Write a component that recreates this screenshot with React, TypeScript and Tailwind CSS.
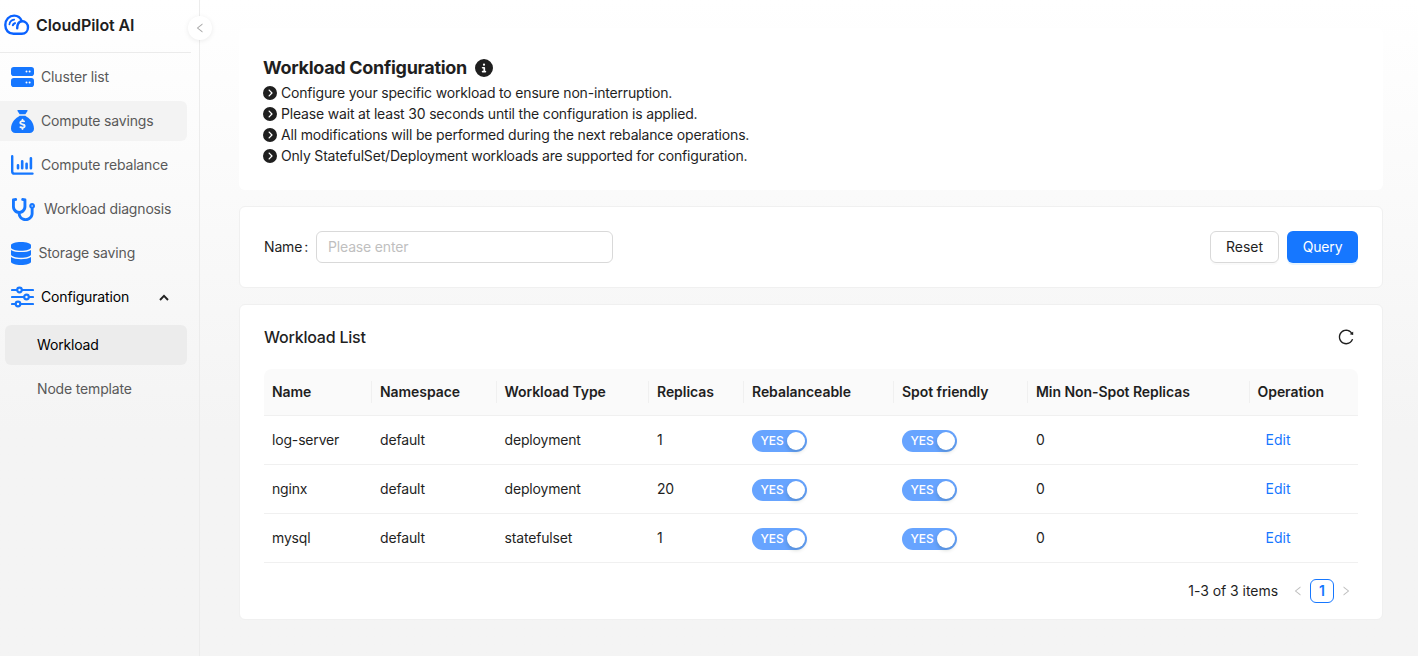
import type { ReactNode } from 'react';
import { FaCircleChevronRight, FaCircleInfo, FaSackDollar } from 'react-icons/fa6';
import { FaDatabase, FaStethoscope } from 'react-icons/fa';
import { AiOutlineLeft, AiOutlineReload, AiOutlineRight } from 'react-icons/ai';

function CloudLogo() {
  return (
    <svg width="26" height="22" viewBox="0 0 26 22" fill="none" stroke="#0a62ff" strokeWidth="2.4" strokeLinecap="round" strokeLinejoin="round">
      <path d="M13.500 19.800H9.500C4.600 19.800 1.300 16.200 1.300 11C1.300 5.500 5.200 1.600 10.200 1.600C13.800 1.600 16.400 3.600 17.700 7C21.800 7.200 24 10 24 13.300C24 17 21.400 19.800 17.800 19.800H12.500" />
      <path d="M13.200 14.300C13.200 10.400 15 7.600 17.700 7.200" />
      <path d="M5.400 10.400C5.800 7.700 7.500 6.100 10.200 5.700" strokeWidth="1.700" />
      <path d="M8.900 11.200C9.200 10.100 9.900 9.500 10.900 9.200" strokeWidth="2.200" />
    </svg>
  );
}

function ServerIcon() {
  return (
    <svg width="23" height="20" viewBox="0 0 23 20">
      <rect width="23" height="9" rx="2.800" fill="#1677ff" />
      <rect y="11" width="23" height="9" rx="2.800" fill="#1677ff" />
      <g fill="#fff">
        <circle cx="15.500" cy="4.500" r="1" />
        <circle cx="18.600" cy="4.500" r="1" />
        <circle cx="15.500" cy="15.500" r="1" />
        <circle cx="18.600" cy="15.500" r="1" />
      </g>
    </svg>
  );
}

function ChartIcon() {
  return (
    <svg width="23" height="20" viewBox="0 0 23 20" fill="none" stroke="#1677ff" strokeWidth="2.400" strokeLinecap="round" strokeLinejoin="round">
      <path d="M1.200 1.200V16.400Q1.200 18.600 3.400 18.600H21.500" />
      <path d="M7 10.300V13.300M11.200 6.200V13.300M15.600 8.800V13.300M19.900 3.200V13.300" strokeWidth="2.600" />
    </svg>
  );
}

function SlidersIcon() {
  return (
    <svg width="23" height="22" viewBox="0 0 23 22" fill="none" stroke="#1677ff" strokeWidth="2.200" strokeLinecap="round">
      <path d="M1 4H6M11 4H22M1 11H12.500M18.500 11H22M1 18H4M10 18H22" />
      <circle cx="8.500" cy="4" r="2.300" />
      <circle cx="15.500" cy="11" r="2.300" />
      <circle cx="7" cy="18" r="2.300" />
    </svg>
  );
}

function MenuItem({ icon, label, gap, className = '' }: { icon: ReactNode; label: string; gap: string; className?: string }) {
  return (
    <div className={`flex h-10 w-[187px] items-center rounded-r-md pl-[11px] ${className}`}>
      {icon}
      <span className={gap}>{label}</span>
    </div>
  );
}

function Sidebar() {
  return (
    <aside className="relative h-full w-[200px] shrink-0 border-r border-[#ececec] tracking-[-0.16px] text-[#595959]">
      <div className="flex h-[53px] w-[191px] items-center border-b border-[#ebebeb] pb-0.5 pl-1">
        <CloudLogo />
        <span className="ml-1.5 text-base font-semibold tracking-[-0.1px] text-[#1f1f1f]">CloudPilot AI</span>
      </div>
      <nav className="flex flex-col gap-1 pt-1">
        <MenuItem icon={<ServerIcon />} label="Cluster list" gap="ml-[7px]" />
        <MenuItem icon={<FaSackDollar size={23} color="#1677ff" />} label="Compute savings" gap="ml-[7px]" className="bg-[#f3f3f3]" />
        <MenuItem icon={<ChartIcon />} label="Compute rebalance" gap="ml-[7px]" />
        <MenuItem icon={<FaStethoscope size={23} className="ml-px" color="#1677ff" />} label="Workload diagnosis" gap="ml-[9px]" />
        <MenuItem icon={<FaDatabase size={23} className="w-5" color="#1677ff" />} label="Storage saving" gap="ml-[7.5px]" />
        <div className="flex h-10 w-[187px] items-center pl-[11px] text-black">
          <SlidersIcon />
          <span className="ml-[7px]">Configuration</span>
          <svg className="mr-[18px] ml-auto" width="10" height="7" viewBox="0 0 10 7" fill="none" stroke="#222" strokeWidth="1.900">
            <path d="M1 6L5 1.800L9 6" />
          </svg>
        </div>
        <div className="mt-1 ml-[5px] flex h-10 w-[182px] items-center rounded-md bg-[#ececec] pl-8 text-black">Workload</div>
        <div className="ml-[5px] flex h-10 w-[182px] items-center pl-8">Node template</div>
      </nav>
      <button className="absolute top-4 -right-[13px] flex size-6 items-center justify-center rounded-full bg-white text-[#aaa] shadow-[0_1px_5px_rgba(0,0,0,0.08)]">
        <AiOutlineLeft size={12} />
      </button>
    </aside>
  );
}

const notes = [
  'Configure your specific workload to ensure non-interruption.',
  'Please wait at least 30 seconds until the configuration is applied.',
  'All modifications will be performed during the next rebalance operations.',
  'Only StatefulSet/Deployment workloads are supported for configuration.',
];

const headers = ['Name', 'Namespace', 'Workload Type', 'Replicas', 'Rebalanceable', 'Spot friendly', 'Min Non-Spot Replicas', 'Operation'];
const columns = 'grid grid-cols-[108px_124.5px_152.5px_95px_150px_134px_221.500px_108.500px]';

const rows = [
  { name: 'log-server', type: 'deployment', replicas: 1 },
  { name: 'nginx', type: 'deployment', replicas: 20 },
  { name: 'mysql', type: 'statefulset', replicas: 1 },
];

function Toggle() {
  return (
    <span className="mt-px flex h-[22px] w-[55px] items-center justify-between rounded-full bg-[#67a4ff] pr-0.5 pl-[8.5px] text-xs font-medium tracking-[-0.1px] text-white">
      YES
      <span className="size-[18px] rounded-full bg-white shadow-[0_2px_4px_rgba(0,35,11,0.2)]" />
    </span>
  );
}

export default function App() {
  return (
    <div className="flex h-[656px] w-[1418px] overflow-hidden bg-linear-to-b from-white to-[#f4f4f4] to-[430px] font-['Inter',sans-serif] text-sm text-[#1f1f1f]">
      <Sidebar />
      <main className="flex flex-1 flex-col gap-4 pt-7 pr-[35px] pl-[39px]">
        <section className="h-[162px] rounded-md bg-white px-6 pt-[27px]">
          <h1 className="flex h-[26px] items-center text-lg font-bold tracking-[-0.3px]">
            Workload Configuration
            <FaCircleInfo size={18} className="ml-2" />
          </h1>
          <ul className="pt-px tracking-[-0.18px]">
            {notes.map((note) => (
              <li key={note} className="flex h-[21px] items-center gap-1">
                <FaCircleChevronRight size={14} />
                {note}
              </li>
            ))}
          </ul>
        </section>

        <section className="flex h-[82px] items-center rounded-md border border-[#f0f0f0] bg-white px-6">
          <label className="flex items-center tracking-[-0.16px]">
            <span className="w-[52px]">Name<span className="ml-0.5">:</span></span>
            <input placeholder="Please enter" className="h-8 w-[297px] rounded-md border border-[#d9d9d9] px-[11px] pb-px outline-none placeholder:text-[#bfbfbf]" />
          </label>
          <button className="ml-auto h-8 w-[69px] rounded-md border border-[#d9d9d9] shadow-[0_2px_0_rgba(0,0,0,0.02)]">Reset</button>
          <button className="ml-2 h-8 w-[71px] rounded-md bg-[#1677ff] tracking-[-0.16px] text-white shadow-[0_2px_0_rgba(5,145,255,0.1)]">Query</button>
        </section>

        <section className="h-[316px] rounded-md border border-[#f0f0f0] bg-white px-6">
          <div className="flex h-16 items-center justify-between pr-[3px]">
            <h2 className="text-base font-medium tracking-[-0.22px]">Workload List</h2>
            <AiOutlineReload size={18} />
          </div>
          <div className={`${columns} h-[47px] items-center overflow-hidden rounded-t-lg border-b border-[#f0f0f0] bg-[#fafafa] font-semibold tracking-[-0.06px]`}>
            {headers.map((header, i) => (
              <div key={header} className={`flex h-[22px] items-center pl-2 ${i < headers.length - 1 ? 'border-r border-[#f0f0f0]' : ''}`}>
                {header}
              </div>
            ))}
          </div>
          {rows.map((row) => (
            <div key={row.name} className={`${columns} h-[49px] items-center border-b border-[#f0f0f0] tracking-[-0.17px] *:pl-2`}>
              <div>{row.name}</div>
              <div>default</div>
              <div>{row.type}</div>
              <div>{row.replicas}</div>
              <div><Toggle /></div>
              <div><Toggle /></div>
              <div>0</div>
              <div><a className="ml-2 tracking-normal text-[#1677ff]">Edit</a></div>
            </div>
          ))}
          <div className="mt-4 flex h-6 items-center justify-end">
            <span className="tracking-[-0.04px]">1-3 of 3 items</span>
            <span className="ml-2 flex size-6 items-center justify-center text-[#bfbfbf]"><AiOutlineLeft size={12} /></span>
            <span className="flex size-6 items-center justify-center rounded-md border border-[#1677ff] font-semibold text-[#1677ff]">1</span>
            <span className="flex size-6 items-center justify-center text-[#bfbfbf]"><AiOutlineRight size={12} /></span>
          </div>
        </section>
      </main>
    </div>
  );
}
